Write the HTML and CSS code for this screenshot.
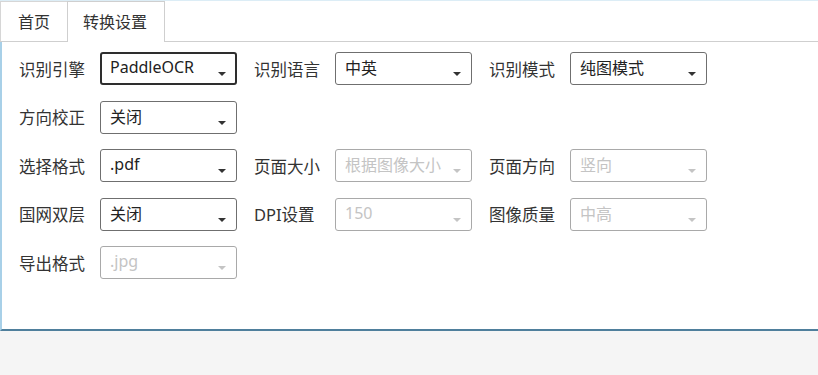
FILE: index.html
```html
<!DOCTYPE html>
<html lang="zh-CN">
<head>
  <meta charset="UTF-8">
  <title>转换设置</title>
  <link rel="stylesheet" href="styles.css">
</head>
<body>
  <div class="tabs">
    <div class="tab">首页</div>
    <div class="tab active">转换设置</div>
  </div>
  <div class="panel">
    <div class="row">
      <div class="field">
        <span class="label">识别引擎</span>
        <div class="combo focus"><span class="value">PaddleOCR</span><i class="arrow"></i></div>
      </div>
      <div class="field">
        <span class="label">识别语言</span>
        <div class="combo"><span class="value">中英</span><i class="arrow"></i></div>
      </div>
      <div class="field">
        <span class="label">识别模式</span>
        <div class="combo"><span class="value">纯图模式</span><i class="arrow"></i></div>
      </div>
    </div>
    <div class="row">
      <div class="field">
        <span class="label">方向校正</span>
        <div class="combo"><span class="value">关闭</span><i class="arrow"></i></div>
      </div>
    </div>
    <div class="row">
      <div class="field">
        <span class="label">选择格式</span>
        <div class="combo"><span class="value">.pdf</span><i class="arrow"></i></div>
      </div>
      <div class="field">
        <span class="label">页面大小</span>
        <div class="combo disabled"><span class="value">根据图像大小</span><i class="arrow"></i></div>
      </div>
      <div class="field">
        <span class="label">页面方向</span>
        <div class="combo disabled"><span class="value">竖向</span><i class="arrow"></i></div>
      </div>
    </div>
    <div class="row">
      <div class="field">
        <span class="label">国网双层</span>
        <div class="combo"><span class="value">关闭</span><i class="arrow"></i></div>
      </div>
      <div class="field">
        <span class="label">DPI设置</span>
        <div class="combo disabled"><span class="value">150</span><i class="arrow"></i></div>
      </div>
      <div class="field">
        <span class="label">图像质量</span>
        <div class="combo disabled"><span class="value">中高</span><i class="arrow"></i></div>
      </div>
    </div>
    <div class="row">
      <div class="field">
        <span class="label">导出格式</span>
        <div class="combo disabled"><span class="value">.jpg</span><i class="arrow"></i></div>
      </div>
    </div>
  </div>
</body>
</html>
```

FILE: styles.css
```css
body {
  margin: 0;
  background-color: #f5f5f5;
  font-family: "Noto Sans", "Noto Sans CJK SC", sans-serif;
  font-size: 16px;
  color: #333;
}
.tabs {
  display: flex;
  align-items: flex-end;
  height: 42px;
  background: #fff;
  border-top: 1px solid #dcedf6;
  border-bottom: 1px solid #cfcfcf;
  box-sizing: border-box;
}
.tab {
  display: flex;
  align-items: center;
  white-space: nowrap;
  height: 40px;
  padding: 0 17px 2px 17px;
  border: 1px solid #d6d6d6;
  border-bottom: none;
  box-sizing: border-box;
  background: #fff;
  width: 68px;
}
.tab.active {
  width: 98px;
  height: 41px;
  margin-bottom: -1px;
  margin-left: -1px;
  padding: 0 0 3px 15px;
  border-color: #cfcfcf;
}
.panel {
  height: 289px;
  box-sizing: border-box;
  background: #fff;
  border-left: 2px solid #a8d0e8;
  border-bottom: 2px solid #4f7f9c;
  padding: 10px 0 0 17px;
}
.row {
  display: flex;
  gap: 17px;
  height: 33px;
  margin-bottom: 15.5px;
}
.field {
  display: flex;
  align-items: center;
}
.label {
  width: 81px;
  color: #333;
  font-size: 16.5px;
}
.combo {
  display: flex;
  width: 137px;
  height: 33px;
  box-sizing: border-box;
  border: 1px solid #6f6f6f;
  border-radius: 3px;
  padding-left: 9px;
  color: #222;
  background: #fff;
}
.combo.focus {
  border: 2px solid #2e2e2e;
  padding-left: 8px;
}
.combo .value {
  flex: 1;
  align-self: center;
  margin-top: -3px;
}
.arrow {
  align-self: flex-end;
  margin: 0 10px 8px 0;
  width: 0;
  height: 0;
  border-left: 4px solid transparent;
  border-right: 4px solid transparent;
  border-top: 4px solid #333;
}
.combo.focus .arrow {
  margin: 0 9px 7px 0;
}
.combo.disabled {
  border-color: #a9a9a9;
  color: #c4c4c4;
}
.combo.disabled .arrow {
  border-top-color: #c4c4c4;
}
```
